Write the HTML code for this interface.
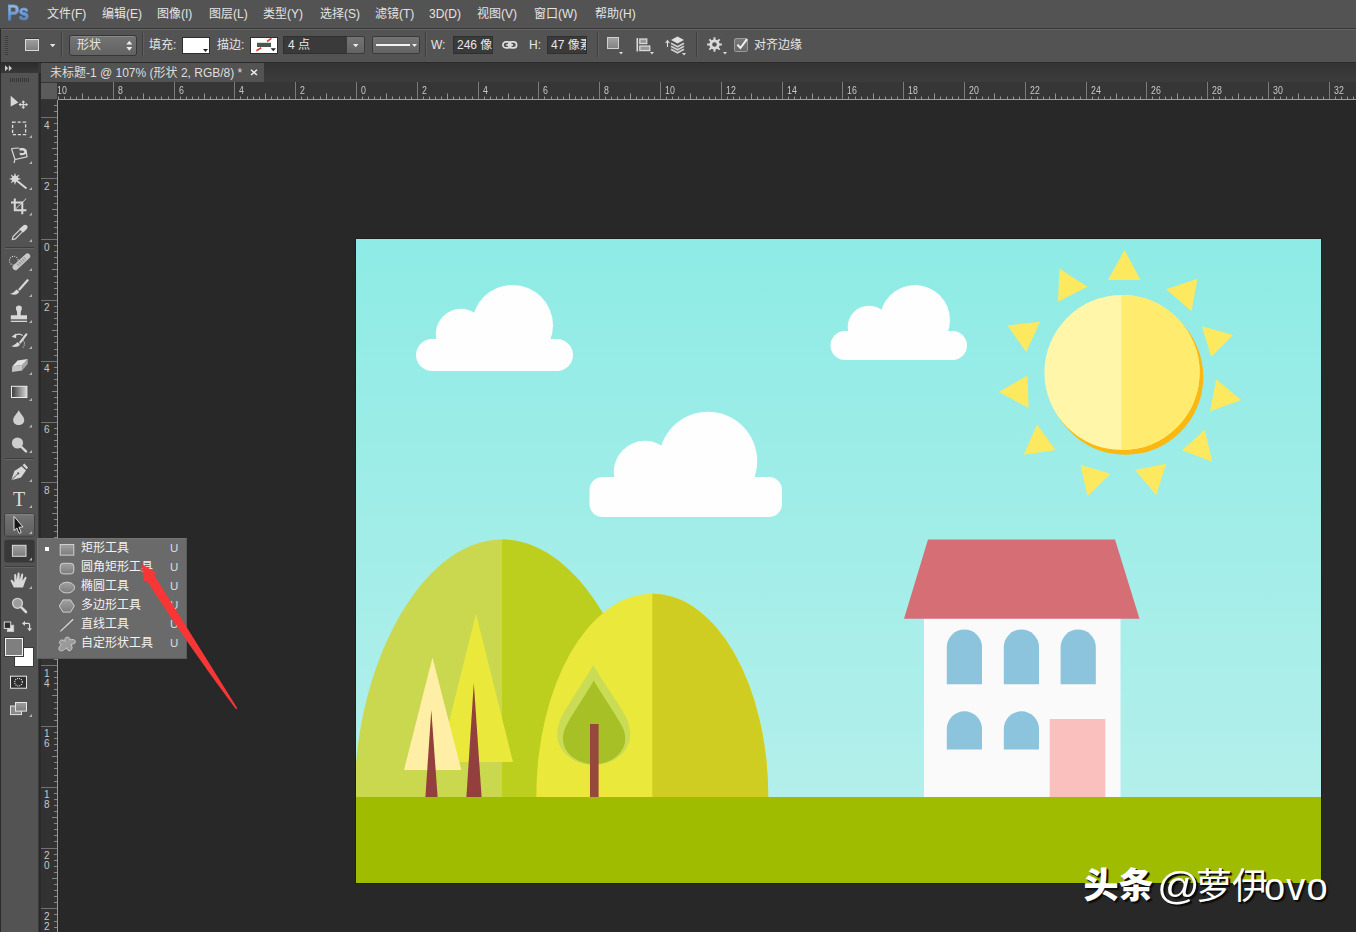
<!DOCTYPE html>
<html lang="zh"><head><meta charset="utf-8"><title>Photoshop</title>
<style>
html,body{margin:0;padding:0}
body{width:1356px;height:932px;overflow:hidden;background:#282828;position:relative;font-family:"Liberation Sans","Noto Sans CJK SC",sans-serif;font-size:12px;color:#e2e2e2;line-height:1}
.a{position:absolute;white-space:nowrap}
svg{position:absolute;display:block;overflow:visible}
#menubar{left:0;top:0;width:1356px;height:28px;background:#535353;border-bottom:1px solid #383838;box-sizing:content-box}
#optbar{left:0;top:29px;width:1356px;height:34px;background:#535353;border-top:1px solid #646464;border-bottom:1px solid #2b2b2b;box-sizing:border-box}
#tabstrip{left:39px;top:63px;width:1317px;height:19px;background:linear-gradient(#343434,#3c3c3c)}
#tab{left:41px;top:63px;width:223px;height:19px;background:#535353}
#hruler{left:41px;top:82px;width:1315px;height:18px;background:#363636}
#vruler{left:41px;top:100px;width:17px;height:832px;background:#323232}
#tools{left:0;top:63px;width:38px;height:869px;background:#535353}
#toolhead{left:0;top:63px;width:39px;height:10px;background:linear-gradient(#2c2c2c,#383838)}
.m{top:8px;color:#e4e4e4}
.o{top:39px;color:#e6e6e6}
.fld{top:36px;height:18px;background:#3a3a3a;border:1px solid #303030;box-sizing:border-box;color:#e8e8e8;overflow:hidden}
.sep{top:32px;width:1px;height:25px;background:#3f3f3f;border-right:1px solid #5f5f5f}
.fl{left:81px;color:#f2f2f2}
.fu{left:170px;color:#dcdce4;font-size:11.5px;margin-top:0.5px}
.k{display:inline-block;overflow:visible;white-space:nowrap;vertical-align:baseline}
.rl{font-size:10px;color:#c8c8c8}
.hl{transform:scaleX(0.88);transform-origin:0 0}
.wm{color:#fff;text-shadow:2px 2px 1px #0c0c0c,1px 1px 0 #111}
</style></head><body>
<!-- canvas artwork -->
<svg id="art" style="left:356px;top:239px;box-shadow:0 0 0 1px #1b2020" width="965" height="644" viewBox="356 239 965 644">
<defs>
<linearGradient id="sky" x1="0" y1="0" x2="0" y2="1"><stop offset="0" stop-color="#8eebe5"/><stop offset="1" stop-color="#b3efeb"/></linearGradient>
<clipPath id="cv"><rect x="356" y="239" width="965" height="644"/></clipPath>
<clipPath id="h1l"><rect x="356" y="500" width="146" height="300"/></clipPath>
<clipPath id="h1r"><rect x="502" y="500" width="200" height="400"/></clipPath>
<clipPath id="h2l"><rect x="520" y="560" width="132.5" height="240"/></clipPath>
<clipPath id="h2r"><rect x="652.3" y="560" width="140" height="240"/></clipPath>
<clipPath id="sl"><rect x="1030" y="280" width="91.3" height="190"/></clipPath>
<clipPath id="sr"><rect x="1121.3" y="280" width="100" height="190"/></clipPath>
</defs>
<g clip-path="url(#cv)">
<rect x="356" y="239" width="965" height="558" fill="url(#sky)"/>
<!-- cloud 1 -->
<g fill="#fefefe">
<rect x="416" y="339" width="157" height="32" rx="16"/>
<circle cx="512.5" cy="325.5" r="40.5"/>
<circle cx="461" cy="334" r="25.2"/>
<!-- cloud 2 -->
<rect x="830.5" y="331" width="136.5" height="29" rx="14.5"/>
<circle cx="915" cy="320" r="35"/>
<circle cx="869" cy="327" r="21.3"/>
<!-- cloud 3 -->
<rect x="589.5" y="477" width="192.5" height="40" rx="13"/>
<circle cx="708" cy="461" r="49.2"/>
<circle cx="645" cy="472" r="31.2"/>
</g>
<!-- sun -->
<circle cx="1125.5" cy="377" r="77.8" fill="#fbb811"/>
<circle cx="1122" cy="372.5" r="77.6" fill="#fff6aa"/>
<circle cx="1122" cy="372.5" r="77.6" fill="#ffec6e" clip-path="url(#sr)"/>
<g fill="#fde95f">
<polygon points="1124.5,250 1108,280 1140.5,280"/>
<polygon points="1059.5,268.7 1087.5,286.8 1058,301.7"/>
<polygon points="1007.5,325.5 1040,321.8 1026.2,352"/>
<polygon points="998.8,392 1027.5,375.5 1028.6,408"/>
<polygon points="1037,424.5 1055.5,450 1023.8,454.8"/>
<polygon points="1080.5,465 1110.5,473.8 1087.5,496.2"/>
<polygon points="1135,470 1166.2,463.8 1156.2,495"/>
<polygon points="1204.7,430 1212.3,461.7 1182,450.3"/>
<polygon points="1216.2,379.5 1241.2,400 1210,411.2"/>
<polygon points="1202,326.2 1233,335 1211.2,357"/>
<polygon points="1197.5,278.8 1166.2,289.2 1191.5,311.2"/>
</g>
<!-- hills -->
<path d="M354.5,798 V797 C354.5,665.3 421.3,539.5 502,539.5 C582.7,539.5 649.5,665.3 649.5,797 V798 Z" fill="#c9d84f"/>
<path d="M354.5,798 V797 C354.5,665.3 421.3,539.5 502,539.5 C582.7,539.5 649.5,665.3 649.5,797 V798 Z" fill="#bccf1e" clip-path="url(#h1r)"/>
<!-- trees on hill 1 -->
<polygon points="476,613.8 513,762 439,762" fill="#eae83b"/>
<polygon points="432.5,657.5 461.3,770 404,770" fill="#ffeea6"/>
<polygon points="431.3,710 437.6,797 425.4,797" fill="#923f3e"/>
<polygon points="473.8,683 481.6,797 466.4,797" fill="#923f3e"/>
<ellipse cx="652.3" cy="797" rx="116" ry="203.3" fill="#eae83b"/>
<ellipse cx="652.3" cy="797" rx="116" ry="203.3" fill="#cfcd21" clip-path="url(#h2r)"/>
<!-- leaf tree -->
<path d="M593.3,665 C599,676 622,708 626.5,718 C629,724 630.2,729 630.2,735 A36.45,30 0 0 1 557.3,735 C557.3,729 558.5,724 561,718 C565.5,708 587.6,676 593.3,665Z" fill="#cadc56"/>
<path d="M593.8,680.5 C599,690 616,715 620,722.5 C623.5,728 625.3,733 625.3,738.6 A31.2,25.7 0 0 1 562.9,738.6 C562.9,733 564.5,728 568,722.5 C572,715 588.6,690 593.8,680.5Z" fill="#a6c026"/>
<rect x="590" y="724" width="8.6" height="74" fill="#96483a"/>
<!-- house -->
<rect x="924" y="618" width="196.5" height="180" fill="#fafafa"/>
<polygon points="928,539.5 1115,539.5 1139.5,618.8 904,618.8" fill="#d56e75"/>
<g fill="#8bc4dc">
<path d="M946.8,684.3 V647.1 a17.6,17.6 0 0 1 35.2,0 V684.3 Z"/>
<path d="M1003.8,684.3 V647.1 a17.6,17.6 0 0 1 35.2,0 V684.3 Z"/>
<path d="M1060.6,684.3 V647.1 a17.6,17.6 0 0 1 35.2,0 V684.3 Z"/>
<path d="M946.8,749.5 V728.9 a17.6,17.6 0 0 1 35.2,0 V749.5 Z"/>
<path d="M1003.8,749.5 V728.9 a17.6,17.6 0 0 1 35.2,0 V749.5 Z"/>
</g>
<rect x="1049.7" y="719" width="55.6" height="79" fill="#fac0be"/>
<!-- ground -->
<rect x="356" y="797" width="965" height="86" fill="#a0bc00"/>
</g>
</svg>
<div class="a" id="menubar"></div>
<div class="a" id="optbar"></div>
<div class="a" style="left:0;top:29px;width:1px;height:34px;background:#2b2b2b"></div>
<div class="a" id="tabstrip"></div>
<div class="a" id="tab"></div>
<div class="a" id="hruler"></div>
<div class="a" id="vruler"></div>
<div class="a" style="left:7px;top:1px;font-size:22px;line-height:24px;font-weight:bold;color:#6c9bcd;letter-spacing:-0.5px;transform:scaleX(0.83);transform-origin:0 0;background:linear-gradient(#96bbe4 20%,#4a7cb8 85%);-webkit-background-clip:text;background-clip:text;-webkit-text-fill-color:transparent;-webkit-text-stroke:0.5px #5f8fc6">Ps</div>
<div class="a m" style="left:47px"><span class="k" style="width:2em">文件</span>(F)</div>
<div class="a m" style="left:102px"><span class="k" style="width:2em">编辑</span>(E)</div>
<div class="a m" style="left:157px"><span class="k" style="width:2em">图像</span>(I)</div>
<div class="a m" style="left:209px"><span class="k" style="width:2em">图层</span>(L)</div>
<div class="a m" style="left:263px"><span class="k" style="width:2em">类型</span>(Y)</div>
<div class="a m" style="left:320px"><span class="k" style="width:2em">选择</span>(S)</div>
<div class="a m" style="left:375px"><span class="k" style="width:2em">滤镜</span>(T)</div>
<div class="a m" style="left:429px">3D(D)</div>
<div class="a m" style="left:477px"><span class="k" style="width:2em">视图</span>(V)</div>
<div class="a m" style="left:534px"><span class="k" style="width:2em">窗口</span>(W)</div>
<div class="a m" style="left:595px"><span class="k" style="width:2em">帮助</span>(H)</div>
<div class="a" style="left:5px;top:36px;width:3px;height:19px;background:repeating-linear-gradient(#3a3a3a 0 1px,#5a5a5a 1px 2px)"></div>
<div class="a" style="left:25px;top:39px;width:14px;height:12px;box-sizing:border-box;border:1px solid #d9d9d9;background:linear-gradient(#9c9c9c,#7e7e7e);box-shadow:0 -1px 0 #3c3c3c"></div>
<svg style="left:50px;top:44px" width="6" height="4"><polygon points="0,0 5.4,0 2.7,3.2" fill="#e4e4e4"/></svg>
<div class="a sep" style="left:61px"></div>
<div class="a" style="left:69px;top:35px;width:68px;height:21px;box-sizing:border-box;border:1px solid #363636;border-radius:3px;background:linear-gradient(#747474,#626262);box-shadow:inset 0 1px 0 #888"></div>
<div class="a o" style="left:77px"><span class="k" style="width:2em">形状</span></div>
<svg style="left:126px;top:40px" width="7" height="12"><polygon points="0.3,4.6 6.3,4.6 3.3,0.8" fill="#ececec"/><polygon points="0.3,7 6.3,7 3.3,10.8" fill="#ececec"/></svg>
<div class="a sep" style="left:142px"></div>
<div class="a o" style="left:149px"><span class="k" style="width:2em">填充</span>:</div>
<div class="a" style="left:182px;top:37px;width:28px;height:17px;box-sizing:border-box;border:1px solid #2f2f2f;background:#fff"></div>
<svg style="left:203px;top:49px" width="6" height="4"><polygon points="0,0 5,0 2.5,3" fill="#222"/></svg>
<div class="a o" style="left:217px"><span class="k" style="width:2em">描边</span>:</div>
<div class="a" style="left:250px;top:37px;width:28px;height:17px;box-sizing:border-box;border:1px solid #2f2f2f;background:#fff"></div>
<svg style="left:250px;top:37px" width="28" height="17"><rect x="7" y="5.8" width="14" height="4.2" fill="#4a5750"/><path d="M6.4,13.8 L11.3,10.7 M17,4.5 L21.5,1.4" stroke="#d94040" stroke-width="1.6" fill="none"/><polygon points="20.6,11.2 26,11.2 23.3,14.3" fill="#222"/></svg>
<div class="a fld" style="left:283px;width:64px"></div>
<div class="a o" style="left:288px">4 <span class="k" style="width:1em">点</span></div>
<div class="a" style="left:346px;top:36px;width:19px;height:18px;box-sizing:border-box;border:1px solid #3a3a3a;border-radius:0 2px 2px 0;background:linear-gradient(#747474,#636363)"></div>
<svg style="left:353px;top:44px" width="6" height="4"><polygon points="0,0 5.4,0 2.7,3.2" fill="#ececec"/></svg>
<div class="a" style="left:372px;top:36px;width:48px;height:18px;box-sizing:border-box;border:1px solid #3a3a3a;border-radius:2px;background:linear-gradient(#747474,#636363)"></div>
<div class="a" style="left:376px;top:44px;width:34px;height:2px;background:#f4f4f4"></div>
<svg style="left:412px;top:44px" width="6" height="4"><polygon points="0,0 5,0 2.5,3" fill="#ececec"/></svg>
<div class="a sep" style="left:425px"></div>
<div class="a o" style="left:431px">W:</div>
<div class="a fld" style="left:453px;width:40px"></div>
<div class="a o" style="left:457px;width:35px;overflow:hidden">246 <span class="k" style="width:2em">像素</span></div>
<svg style="left:502px;top:40px" width="16" height="10"><rect x="0.9" y="1.9" width="8" height="6" rx="3" fill="none" stroke="#dedede" stroke-width="1.7"/><rect x="6.6" y="1.9" width="8" height="6" rx="3" fill="none" stroke="#dedede" stroke-width="1.7"/><rect x="4.3" y="4.1" width="6.8" height="1.7" fill="#dedede"/></svg>
<div class="a o" style="left:529px">H:</div>
<div class="a fld" style="left:547px;width:40px"></div>
<div class="a o" style="left:551px;width:35px;overflow:hidden">47 <span class="k" style="width:2em">像素</span></div>
<div class="a sep" style="left:597px"></div>
<div class="a" style="left:607px;top:37px;width:12px;height:12px;box-sizing:border-box;border:1px solid #cfcfcf;background:linear-gradient(#a2a2a2,#848484)"></div>
<svg style="left:619px;top:52px" width="5" height="3"><polygon points="0,0 4,0 2,2.4" fill="#dcdcdc"/></svg>
<svg style="left:636px;top:37px" width="20" height="18"><rect x="0.5" y="1" width="1.6" height="13.5" fill="#dcdcdc"/><rect x="3.8" y="2" width="7" height="4.6" fill="#9a9a9a" stroke="#dcdcdc" stroke-width="1.2"/><rect x="3.8" y="9" width="10" height="4.6" fill="#9a9a9a" stroke="#dcdcdc" stroke-width="1.2"/><polygon points="14,15 18,15 16,17.4" fill="#dcdcdc"/></svg>
<svg style="left:665px;top:35px" width="22" height="21"><path d="M2.5,12 V6 M0.6,8 L2.5,5.6 L4.4,8" stroke="#dcdcdc" stroke-width="1.1" fill="none"/><polygon points="12.5,1.5 19,5 12.5,8.5 6,5" fill="#e0e0e0"/><path d="M6,8.2 L12.5,11.7 L19,8.2 M6,11.2 L12.5,14.7 L19,11.2 M6,14.2 L12.5,17.7 L19,14.2" stroke="#cfcfcf" stroke-width="1.7" fill="none"/><polygon points="17,18 21,18 19,20.4" fill="#dcdcdc"/></svg>
<div class="a sep" style="left:696px"></div>
<svg style="left:707px;top:37px" width="22" height="19"><polygon points="14.84,6.54 14.84,8.46 12.61,8.45 11.79,10.44 13.37,12.01 12.01,13.37 10.44,11.79 8.45,12.61 8.46,14.84 6.54,14.84 6.55,12.61 4.56,11.79 2.99,13.37 1.63,12.01 3.21,10.44 2.39,8.45 0.16,8.46 0.16,6.54 2.39,6.55 3.21,4.56 1.63,2.99 2.99,1.63 4.56,3.21 6.55,2.39 6.54,0.16 8.46,0.16 8.45,2.39 10.44,3.21 12.01,1.63 13.37,2.99 11.79,4.56 12.61,6.55" fill="#dadada"/><circle cx="7.5" cy="7.5" r="2.3" fill="#535353"/><polygon points="16,15 20,15 18,17.4" fill="#dcdcdc"/></svg>
<div class="a" style="left:734px;top:38px;width:14px;height:14px;box-sizing:border-box;border:1px solid #9a9a9a;border-radius:2px;background:linear-gradient(#787878,#676767)"></div>
<svg style="left:734px;top:36px" width="16" height="16"><path d="M3.4,8.6 L6.4,12 L13,3.2" stroke="#f2f2f2" stroke-width="2" fill="none"/></svg>
<div class="a o" style="left:754px"><span class="k" style="width:4em">对齐边缘</span></div>
<div class="a" style="left:50px;top:67px;color:#dedede"><span class="k" style="width:3em">未标题</span>-1 @ 107% (<span class="k" style="width:2em">形状</span> 2, RGB/8) *</div>
<svg style="left:250px;top:69px" width="8" height="7"><path d="M1,0.8 L7,6 M7,0.8 L1,6" stroke="#ececec" stroke-width="1.5"/></svg>
<svg style="left:0;top:0" width="1356" height="101"><path d="M113.5,82V99M174.5,82V99M234.5,82V99M295.5,82V99M356.5,82V99M417.5,82V99M478.5,82V99M538.5,82V99M599.5,82V99M660.5,82V99M721.5,82V99M782.5,82V99M842.5,82V99M903.5,82V99M964.5,82V99M1025.5,82V99M1086.5,82V99M1146.5,82V99M1207.5,82V99M1268.5,82V99M1329.5,82V99" stroke="#7c7c7c" stroke-width="1" fill="none"/><path d="M58.5,96.5V100M64.5,96.5V100M70.5,96.5V100M76.5,96.5V100M82.5,93.5V100M88.5,96.5V100M95.5,96.5V100M101.5,96.5V100M107.5,96.5V100M119.5,96.5V100M125.5,96.5V100M131.5,96.5V100M137.5,96.5V100M143.5,93.5V100M149.5,96.5V100M155.5,96.5V100M161.5,96.5V100M168.5,96.5V100M180.5,96.5V100M186.5,96.5V100M192.5,96.5V100M198.5,96.5V100M204.5,93.5V100M210.5,96.5V100M216.5,96.5V100M222.5,96.5V100M228.5,96.5V100M240.5,96.5V100M247.5,96.5V100M253.5,96.5V100M259.5,96.5V100M265.5,93.5V100M271.5,96.5V100M277.5,96.5V100M283.5,96.5V100M289.5,96.5V100M301.5,96.5V100M307.5,96.5V100M313.5,96.5V100M320.5,96.5V100M326.5,93.5V100M332.5,96.5V100M338.5,96.5V100M344.5,96.5V100M350.5,96.5V100M362.5,96.5V100M368.5,96.5V100M374.5,96.5V100M380.5,96.5V100M386.5,93.5V100M392.5,96.5V100M399.5,96.5V100M405.5,96.5V100M411.5,96.5V100M423.5,96.5V100M429.5,96.5V100M435.5,96.5V100M441.5,96.5V100M447.5,93.5V100M453.5,96.5V100M459.5,96.5V100M465.5,96.5V100M472.5,96.5V100M484.5,96.5V100M490.5,96.5V100M496.5,96.5V100M502.5,96.5V100M508.5,93.5V100M514.5,96.5V100M520.5,96.5V100M526.5,96.5V100M532.5,96.5V100M544.5,96.5V100M551.5,96.5V100M557.5,96.5V100M563.5,96.5V100M569.5,93.5V100M575.5,96.5V100M581.5,96.5V100M587.5,96.5V100M593.5,96.5V100M605.5,96.5V100M611.5,96.5V100M617.5,96.5V100M624.5,96.5V100M630.5,93.5V100M636.5,96.5V100M642.5,96.5V100M648.5,96.5V100M654.5,96.5V100M666.5,96.5V100M672.5,96.5V100M678.5,96.5V100M684.5,96.5V100M690.5,93.5V100M696.5,96.5V100M703.5,96.5V100M709.5,96.5V100M715.5,96.5V100M727.5,96.5V100M733.5,96.5V100M739.5,96.5V100M745.5,96.5V100M751.5,93.5V100M757.5,96.5V100M763.5,96.5V100M769.5,96.5V100M776.5,96.5V100M788.5,96.5V100M794.5,96.5V100M800.5,96.5V100M806.5,96.5V100M812.5,93.5V100M818.5,96.5V100M824.5,96.5V100M830.5,96.5V100M836.5,96.5V100M848.5,96.5V100M855.5,96.5V100M861.5,96.5V100M867.5,96.5V100M873.5,93.5V100M879.5,96.5V100M885.5,96.5V100M891.5,96.5V100M897.5,96.5V100M909.5,96.5V100M915.5,96.5V100M921.5,96.5V100M928.5,96.5V100M934.5,93.5V100M940.5,96.5V100M946.5,96.5V100M952.5,96.5V100M958.5,96.5V100M970.5,96.5V100M976.5,96.5V100M982.5,96.5V100M988.5,96.5V100M994.5,93.5V100M1000.5,96.5V100M1007.5,96.5V100M1013.5,96.5V100M1019.5,96.5V100M1031.5,96.5V100M1037.5,96.5V100M1043.5,96.5V100M1049.5,96.5V100M1055.5,93.5V100M1061.5,96.5V100M1067.5,96.5V100M1073.5,96.5V100M1080.5,96.5V100M1092.5,96.5V100M1098.5,96.5V100M1104.5,96.5V100M1110.5,96.5V100M1116.5,93.5V100M1122.5,96.5V100M1128.5,96.5V100M1134.5,96.5V100M1140.5,96.5V100M1152.5,96.5V100M1159.5,96.5V100M1165.5,96.5V100M1171.5,96.5V100M1177.5,93.5V100M1183.5,96.5V100M1189.5,96.5V100M1195.5,96.5V100M1201.5,96.5V100M1213.5,96.5V100M1219.5,96.5V100M1225.5,96.5V100M1232.5,96.5V100M1238.5,93.5V100M1244.5,96.5V100M1250.5,96.5V100M1256.5,96.5V100M1262.5,96.5V100M1274.5,96.5V100M1280.5,96.5V100M1286.5,96.5V100M1292.5,96.5V100M1298.5,93.5V100M1304.5,96.5V100M1311.5,96.5V100M1317.5,96.5V100M1323.5,96.5V100M1335.5,96.5V100M1341.5,96.5V100M1347.5,96.5V100M1353.5,96.5V100" stroke="#959595" stroke-width="1" fill="none"/><rect x="58" y="99" width="1298" height="1" fill="#9e9e9e"/></svg>
<div class="a" style="left:58px;top:82px;width:1298px;height:17px;overflow:hidden"><span class="a rl hl" style="left:-1.4px;top:4px">10</span><span class="a rl hl" style="left:59.6px;top:4px">8</span><span class="a rl hl" style="left:120.6px;top:4px">6</span><span class="a rl hl" style="left:180.6px;top:4px">4</span><span class="a rl hl" style="left:241.6px;top:4px">2</span><span class="a rl hl" style="left:302.6px;top:4px">0</span><span class="a rl hl" style="left:363.6px;top:4px">2</span><span class="a rl hl" style="left:424.6px;top:4px">4</span><span class="a rl hl" style="left:484.6px;top:4px">6</span><span class="a rl hl" style="left:545.6px;top:4px">8</span><span class="a rl hl" style="left:606.6px;top:4px">10</span><span class="a rl hl" style="left:667.6px;top:4px">12</span><span class="a rl hl" style="left:728.6px;top:4px">14</span><span class="a rl hl" style="left:788.6px;top:4px">16</span><span class="a rl hl" style="left:849.6px;top:4px">18</span><span class="a rl hl" style="left:910.6px;top:4px">20</span><span class="a rl hl" style="left:971.6px;top:4px">22</span><span class="a rl hl" style="left:1032.6px;top:4px">24</span><span class="a rl hl" style="left:1092.6px;top:4px">26</span><span class="a rl hl" style="left:1153.6px;top:4px">28</span><span class="a rl hl" style="left:1214.6px;top:4px">30</span><span class="a rl hl" style="left:1275.6px;top:4px">32</span></div>
<div class="a" style="left:41px;top:83px;width:16px;height:16px;background:#5b5b5b"></div>
<svg style="left:0;top:0" width="59" height="932"><path d="M41,117.5H57M41,178.5H57M41,239.5H57M41,300.5H57M41,361.5H57M41,422.5H57M41,482.5H57M41,543.5H57M41,604.5H57M41,665.5H57M41,726.5H57M41,787.5H57M41,848.5H57M41,908.5H57" stroke="#727272" stroke-width="1" fill="none"/><path d="M54,105.5H58M54,111.5H58M54,123.5H58M54,130.5H58M54,136.5H58M54,142.5H58M52,148.5H58M54,154.5H58M54,160.5H58M54,166.5H58M54,172.5H58M54,184.5H58M54,190.5H58M54,196.5H58M54,203.5H58M52,209.5H58M54,215.5H58M54,221.5H58M54,227.5H58M54,233.5H58M54,245.5H58M54,251.5H58M54,257.5H58M54,263.5H58M52,269.5H58M54,276.5H58M54,282.5H58M54,288.5H58M54,294.5H58M54,306.5H58M54,312.5H58M54,318.5H58M54,324.5H58M52,330.5H58M54,336.5H58M54,342.5H58M54,349.5H58M54,355.5H58M54,367.5H58M54,373.5H58M54,379.5H58M54,385.5H58M52,391.5H58M54,397.5H58M54,403.5H58M54,409.5H58M54,416.5H58M54,428.5H58M54,434.5H58M54,440.5H58M54,446.5H58M52,452.5H58M54,458.5H58M54,464.5H58M54,470.5H58M54,476.5H58M54,489.5H58M54,495.5H58M54,501.5H58M54,507.5H58M52,513.5H58M54,519.5H58M54,525.5H58M54,531.5H58M54,537.5H58M54,549.5H58M54,555.5H58M54,562.5H58M54,568.5H58M52,574.5H58M54,580.5H58M54,586.5H58M54,592.5H58M54,598.5H58M54,610.5H58M54,616.5H58M54,622.5H58M54,628.5H58M52,635.5H58M54,641.5H58M54,647.5H58M54,653.5H58M54,659.5H58M54,671.5H58M54,677.5H58M54,683.5H58M54,689.5H58M52,695.5H58M54,702.5H58M54,708.5H58M54,714.5H58M54,720.5H58M54,732.5H58M54,738.5H58M54,744.5H58M54,750.5H58M52,756.5H58M54,762.5H58M54,768.5H58M54,775.5H58M54,781.5H58M54,793.5H58M54,799.5H58M54,805.5H58M54,811.5H58M52,817.5H58M54,823.5H58M54,829.5H58M54,835.5H58M54,841.5H58M54,854.5H58M54,860.5H58M54,866.5H58M54,872.5H58M52,878.5H58M54,884.5H58M54,890.5H58M54,896.5H58M54,902.5H58M54,914.5H58M54,921.5H58M54,927.5H58" stroke="#868686" stroke-width="1" fill="none"/><rect x="57" y="100" width="1" height="832" fill="#9a9a9a"/></svg>
<div class="a rl" style="left:44px;top:120.9px;width:6px;line-height:10px;white-space:normal;word-break:break-all">4</div><div class="a rl" style="left:44px;top:181.7px;width:6px;line-height:10px;white-space:normal;word-break:break-all">2</div><div class="a rl" style="left:44px;top:242.6px;width:6px;line-height:10px;white-space:normal;word-break:break-all">0</div><div class="a rl" style="left:44px;top:303.4px;width:6px;line-height:10px;white-space:normal;word-break:break-all">2</div><div class="a rl" style="left:44px;top:364.2px;width:6px;line-height:10px;white-space:normal;word-break:break-all">4</div><div class="a rl" style="left:44px;top:425.1px;width:6px;line-height:10px;white-space:normal;word-break:break-all">6</div><div class="a rl" style="left:44px;top:486.0px;width:6px;line-height:10px;white-space:normal;word-break:break-all">8</div><div class="a rl" style="left:44px;top:546.8px;width:6px;line-height:10px;white-space:normal;word-break:break-all">10</div><div class="a rl" style="left:44px;top:607.7px;width:6px;line-height:10px;white-space:normal;word-break:break-all">12</div><div class="a rl" style="left:44px;top:668.5px;width:6px;line-height:10px;white-space:normal;word-break:break-all">14</div><div class="a rl" style="left:44px;top:729.4px;width:6px;line-height:10px;white-space:normal;word-break:break-all">16</div><div class="a rl" style="left:44px;top:790.2px;width:6px;line-height:10px;white-space:normal;word-break:break-all">18</div><div class="a rl" style="left:44px;top:851.0px;width:6px;line-height:10px;white-space:normal;word-break:break-all">20</div><div class="a rl" style="left:44px;top:911.9px;width:6px;line-height:10px;white-space:normal;word-break:break-all">22</div>
<!-- tools panel -->
<div class="a" id="tools"></div>
<div class="a" id="toolhead"></div>
<div class="a" style="left:0;top:63px;width:1px;height:869px;background:#2b2b2b"></div>
<div class="a" style="left:38px;top:63px;width:1px;height:869px;background:#3a3a3a"></div>
<div class="a" style="left:39px;top:73px;width:2px;height:859px;background:#2a2a2a"></div>
<svg id="toolsvg" style="left:0;top:63px" width="39" height="869" viewBox="0 63 39 869">
<defs>
<linearGradient id="gb" x1="0" y1="0" x2="0" y2="1"><stop offset="0" stop-color="#747474"/><stop offset="1" stop-color="#5e5e5e"/></linearGradient>
<linearGradient id="gs" x1="0" y1="0" x2="0" y2="1"><stop offset="0" stop-color="#a0a0a0"/><stop offset="1" stop-color="#7c7c7c"/></linearGradient>
<linearGradient id="gg" x1="0" y1="0" x2="1" y2="0"><stop offset="0" stop-color="#3a3a3a"/><stop offset="1" stop-color="#d8d8d8"/></linearGradient>
</defs>
<!-- header arrows, grip -->
<polygon points="5,65.2 8.2,68.2 5,71.2" fill="#cfcfcf"/><polygon points="8.8,65.2 12,68.2 8.8,71.2" fill="#cfcfcf"/>
<path d="M10.5,78v4M12.5,78v4M14.5,78v4M16.5,78v4M18.5,78v4M20.5,78v4M22.5,78v4M24.5,78v4M26.5,78v4M28.5,78v4" stroke="#363636" stroke-width="1"/>
<!-- separators -->
<g stroke="#3d3d3d" stroke-width="1"><path d="M5,247.5H34M5,458.5H34M5,566.5H34"/></g>
<g stroke="#636363" stroke-width="1"><path d="M5,248.5H34M5,459.5H34M5,567.5H34"/></g>
<g fill="#d8d8d8" stroke="none">
<!-- move -->
<polygon points="10.7,95.8 18.4,102.6 10.7,106.6"/>
<path d="M23.3,100.3 l2,2.3 h-1.4 v1.4 h1.9 v-1.3 l2.3,1.9 l-2.3,1.9 v-1.3 h-1.9 v1.5 h1.4 l-2,2.3 l-2,-2.3 h1.4 v-1.5 h-1.9 v1.3 l-2.3,-1.9 l2.3,-1.9 v1.3 h1.9 v-1.4 h-1.4 z"/>
</g>
<!-- marquee -->
<rect x="12.6" y="122.2" width="13" height="12.4" fill="none" stroke="#dcdcdc" stroke-width="1.3" stroke-dasharray="3.2 1.8"/>
<!-- polygonal lasso -->
<path d="M11.5,148.5 L19,148 M11.5,148.5 L15,159.5 L27,156.8 L26.3,152 M15,159.5 L14,163" fill="none" stroke="#d8d8d8" stroke-width="1.2"/>
<path d="M19.2,148.3 c6,-1.5 8.5,1.5 7.6,4.3 c-0.8,2.6 -5,3.2 -6.8,2.3 l-0.5,-2.3 c2,0.9 4.4,0.6 4.7,-0.7 c0.3,-1.3 -1.8,-1.9 -4.4,-1.2 z" fill="#d8d8d8"/>
<!-- magic wand -->
<path d="M17.8,181.5 L26.5,188.5" stroke="#d8d8d8" stroke-width="2" fill="none"/>
<path d="M15,172.8 l1.1,3.4 l3.3,-1.7 l-1.7,3.2 l3.4,1.2 l-3.4,1.1 l1.6,3.2 l-3.2,-1.7 l-1.1,3.5 l-1.1,-3.5 l-3.2,1.7 l1.6,-3.2 l-3.4,-1.1 l3.4,-1.2 l-1.7,-3.2 l3.3,1.7 z" fill="#d8d8d8"/>
<!-- crop -->
<path d="M14.8,198.5 V210.3 H26.4 M11,202.6 H22.3 V214.2" fill="none" stroke="#d8d8d8" stroke-width="2"/>
<path d="M26.2,198.6 L16,208.6" stroke="#d8d8d8" stroke-width="1"/>
<!-- eyedropper -->
<path d="M12.3,239.6 L13,236.6 L20.3,229.3 L22.6,231.6 L15.3,238.9 Z" fill="none" stroke="#d8d8d8" stroke-width="1.1"/>
<path d="M19.4,228.6 L23.3,232.5 L24.6,231.2 L27,228.8 C28,227.6 27.6,226 26.7,225.3 C25.8,224.5 24.3,224.4 23.2,225.4 L20.8,227.8 Z" fill="#d8d8d8"/>
<!-- spot heal -->
<circle cx="13.8" cy="260.7" r="4.4" fill="none" stroke="#d8d8d8" stroke-width="1.1" stroke-dasharray="1 1.3"/>
<path d="M15.4,267.4 L27.4,256.2" stroke="#c8c8c8" stroke-width="5.6" stroke-linecap="round" fill="none"/>
<path d="M17.8,265.2 L25.2,258.2" stroke="#8a8a8a" stroke-width="3.2" stroke-dasharray="1 1.4" fill="none"/>
<!-- brush -->
<path d="M27.6,280.2 L19.4,289.4" stroke="#d8d8d8" stroke-width="2.2" stroke-linecap="round" fill="none"/>
<path d="M10,293.6 C13,293.4 14.6,291.6 16.4,289.4 L19.2,291.6 C18.6,294.6 14.2,296 10,293.6 Z" fill="#d8d8d8"/>
<!-- stamp -->
<path d="M18.9,305.5 a3,3 0 0 1 3,3 c0,1.6 -1.2,2.4 -1.2,4.4 v2.3 h6.3 v4.4 h-16.2 v-4.4 h6.3 v-2.3 c0,-2 -1.2,-2.8 -1.2,-4.4 a3,3 0 0 1 3,-3 z" fill="#d8d8d8"/>
<rect x="10.8" y="320.6" width="16.2" height="1.4" fill="#d8d8d8"/>
<rect x="10.8" y="319.4" width="16.2" height="1.1" fill="#6a6a6a"/>
<!-- history brush -->
<path d="M26.3,334.4 L20.3,342.4" stroke="#d8d8d8" stroke-width="2.2" stroke-linecap="round" fill="none"/>
<path d="M11.2,346 C14,345.6 15.8,344 17.4,342 L20,344 C19.4,346.8 15.2,348.2 11.2,346 Z" fill="#d8d8d8"/>
<path d="M14.2,336.2 C17,333.4 20.6,333.6 22.6,335.6" stroke="#d8d8d8" stroke-width="1.3" fill="none"/>
<polygon points="11.6,336.8 16,333.4 16.2,338.2" fill="#d8d8d8"/>
<path d="M23.3,340.5 C25.2,342.6 24.6,346 22.6,347.6" stroke="#d8d8d8" stroke-width="1.1" stroke-dasharray="1 1.2" fill="none"/>
<!-- eraser -->
<polygon points="12.2,366.4 17.6,360.6 27.8,359 22.6,364.8" fill="#e2e2e2"/>
<polygon points="12.2,366.4 22.6,364.8 22.2,370.4 12,372" fill="#c4c4c4"/>
<polygon points="22.6,364.8 27.8,359 27.6,364 22.2,370.4" fill="#a8a8a8"/>
<!-- gradient -->
<rect x="11.5" y="386.3" width="15.4" height="11.2" fill="url(#gg)" stroke="#ececec" stroke-width="1"/>
<!-- blur drop -->
<path d="M18.7,410.3 C20.4,414 24.2,416.6 24.2,420 C24.2,423.2 21.8,425 18.7,425 C15.6,425 13.2,423.2 13.2,420 C13.2,416.6 17,414 18.7,410.3 Z" fill="#d0d0d0"/>
<!-- dodge -->
<circle cx="17.5" cy="443" r="5.6" fill="#cdcdcd"/>
<path d="M21.4,447 L26,451.4" stroke="#d8d8d8" stroke-width="2.4" stroke-linecap="round"/>
<!-- pen -->
<path d="M11.3,480.3 L14.4,471 L21.6,466.2 L26,470.6 L21,477.6 Z" fill="#d8d8d8"/>
<path d="M22.6,465.2 L24.4,463.6 L28,467.4 L26.6,469.2 Z" fill="#d8d8d8"/>
<path d="M11.3,480.3 L17.5,474" stroke="#555" stroke-width="1"/><circle cx="18.2" cy="473.4" r="1.1" fill="#555"/>
<!-- path select button + arrow -->
<rect x="4.5" y="513.8" width="30" height="22.4" rx="2" fill="url(#gb)" stroke="#404040" stroke-width="1"/>
<path d="M5.5,514.8 H33.5" stroke="#8a8a8a" stroke-width="1"/>
<path d="M14,516.4 V530.6 L16.9,528 L19,533.4 L21.2,532.5 L19,527.2 L23,527 Z" fill="#161616" stroke="#ececec" stroke-width="0.9"/>
<!-- shape button -->
<rect x="4.3" y="539.8" width="30.4" height="22.6" rx="2.5" fill="#383838"/>
<rect x="12.4" y="545.3" width="13.6" height="11" fill="url(#gs)" stroke="#dadada" stroke-width="1"/>
<!-- hand -->
<path d="M13.8,587.6 C12.6,584.8 11.2,582.4 10.6,580.8 C10.4,579.6 11.8,579.2 12.6,580.2 L14.4,582.6 L14.2,575 C14.2,573.6 16,573.6 16.2,575 L16.8,580 L17.6,573.4 C17.8,572 19.6,572.2 19.6,573.6 L19.6,580 L21.2,574.4 C21.6,573 23.4,573.4 23.2,574.8 L22.4,580.8 L24.6,577.4 C25.4,576.2 27,577 26.4,578.4 C25,581.6 24.2,584.4 23,587.6 Z" fill="#d8d8d8"/>
<!-- zoom -->
<circle cx="17.5" cy="603.3" r="4.9" fill="#9c9c9c" stroke="#d0d0d0" stroke-width="1.4"/>
<path d="M21.6,607.6 L26,612" stroke="#d8d8d8" stroke-width="2.6" stroke-linecap="round"/>
<!-- default colors -->
<rect x="7.3" y="625.2" width="6.4" height="6.4" fill="#e0e0e0" stroke="#c8c8c8" stroke-width="0.8"/>
<rect x="4.3" y="622" width="6.4" height="6.4" fill="#2c2c2c" stroke="#d8d8d8" stroke-width="1"/>
<!-- swap -->
<path d="M24.6,623.4 H28.4 C29.4,623.4 29.6,624 29.6,625 V628.4" stroke="#dcdcdc" stroke-width="1.3" fill="none"/>
<polygon points="22,623.4 25,621 25,625.8" fill="#dcdcdc"/><polygon points="29.6,631.2 27.2,628.2 32,628.2" fill="#dcdcdc"/>
<!-- bg / fg swatches -->
<rect x="14.5" y="647.5" width="19" height="19" fill="#ffffff" stroke="#3a3a3a" stroke-width="1"/>
<rect x="4.5" y="637.5" width="19" height="19" fill="none" stroke="#3a3a3a" stroke-width="1"/>
<rect x="5" y="638" width="18" height="18" fill="#f4f4f4"/>
<rect x="6" y="639" width="16" height="16" fill="#7f7f7f"/>
<!-- quick mask -->
<rect x="10.5" y="676.2" width="16" height="12" fill="#2e2e2e" stroke="#e6e6e6" stroke-width="1"/>
<circle cx="18.5" cy="682.2" r="3.8" fill="none" stroke="#f0f0f0" stroke-width="1.1" stroke-dasharray="1 1"/>
<!-- screen mode -->
<rect x="10.5" y="706" width="11" height="8.6" fill="#8a8a8a" stroke="#e0e0e0" stroke-width="1"/>
<rect x="15.5" y="702.5" width="11" height="8.6" fill="url(#gs)" stroke="#e6e6e6" stroke-width="1"/>
<!-- flyout corner marks -->
<g fill="#b4b4b4">
<polygon points="32,135 32,138 29,138"/><polygon points="32,161 32,164 29,164"/><polygon points="32,187 32,190 29,190"/><polygon points="32,212.5 32,215.5 29,215.5"/><polygon points="32,239 32,242 29,242"/>
<polygon points="32,268 32,271 29,271"/><polygon points="32,294 32,297 29,297"/><polygon points="32,320 32,323 29,323"/><polygon points="32,346 32,349 29,349"/>
<polygon points="32,372 32,375 29,375"/><polygon points="32,398 32,401 29,401"/><polygon points="32,424.5 32,427.5 29,427.5"/><polygon points="32,450 32,453 29,453"/>
<polygon points="32,479 32,482 29,482"/><polygon points="32,505 32,508 29,508"/><polygon points="32,531 32,534 29,534"/><polygon points="32,557.5 32,560.5 29,560.5"/><polygon points="32,586 32,589 29,589"/>
<polygon points="32,714 32,717 29,717"/>
</g>
</svg>
<div class="a" style="left:12px;top:489px;width:14px;text-align:center;font-family:'Liberation Serif',serif;font-size:20px;color:#dcdcdc">T</div>
<!-- flyout menu -->
<div class="a" style="left:37px;top:538px;width:150px;height:121px;background:#6a6a6a;box-sizing:border-box;border:1px solid #747474;border-right-color:#5c5c5c;border-bottom-color:#5c5c5c"></div>
<div class="a" style="left:45px;top:547px;width:4px;height:4px;background:#fff"></div>
<svg id="flyicons" style="left:56px;top:540px" width="24" height="116" viewBox="56 540 24 116">
<rect x="60.2" y="544.5" width="13.6" height="10.6" fill="url(#gs)" stroke="#d0d0d0" stroke-width="1"/>
<rect x="60.2" y="563.3" width="13.6" height="10.6" rx="3" fill="url(#gs)" stroke="#d0d0d0" stroke-width="1"/>
<ellipse cx="67" cy="587.6" rx="7.6" ry="5.4" fill="url(#gs)" stroke="#d0d0d0" stroke-width="1"/>
<polygon points="59.3,606 63,599.9 70.6,599.9 74.3,606 70.6,612.1 63,612.1" fill="url(#gs)" stroke="#d0d0d0" stroke-width="1"/>
<path d="M60.4,631.4 L73.2,619.2" stroke="#d8d8d8" stroke-width="1.3"/>
<path d="M66,637.6 C68,636.4 70.4,637.6 70,640 C72,638.8 75.6,639.6 75.4,641.8 C75.2,644 72.6,644 71,644.4 C72.6,646.6 72.4,649.6 70.4,650.6 C68.4,651.4 66.6,649.4 66.2,647.6 C64.8,649.6 62.4,651.6 60,650.6 C57.8,649.4 59,646.2 61.4,644.6 C59.4,644.2 58.6,641.6 60.4,640.4 C62.2,639.4 64.2,640.4 65.2,641.4 C64.6,640 64.6,638.4 66,637.6 Z" fill="#9a9a9a" stroke="#c8c8c8" stroke-width="1"/>
</svg>
<div class="a fl" style="top:542px"><span class="k" style="width:4em">矩形工具</span></div><div class="a fu" style="top:542px">U</div>
<div class="a fl" style="top:561px"><span class="k" style="width:6em">圆角矩形工具</span></div><div class="a fu" style="top:561px">U</div>
<div class="a fl" style="top:580px"><span class="k" style="width:4em">椭圆工具</span></div><div class="a fu" style="top:580px">U</div>
<div class="a fl" style="top:599px"><span class="k" style="width:5em">多边形工具</span></div><div class="a fu" style="top:599px">U</div>
<div class="a fl" style="top:618px"><span class="k" style="width:4em">直线工具</span></div><div class="a fu" style="top:618px">U</div>
<div class="a fl" style="top:637px"><span class="k" style="width:6em">自定形状工具</span></div><div class="a fu" style="top:637px">U</div>
<!-- red arrow -->
<svg style="left:130px;top:555px" width="120" height="165" viewBox="130 555 120 165"><path d="M141.6,564 L156.4,572.7 L154.1,575 L237.3,708.2 L236,709.3 Q189,646.4 146.7,580.4 L143.8,581.4 Z" fill="#f93636"/></svg>
<!-- watermark -->
<div class="a wm" style="left:1083.5px;top:867.5px;font-size:35px;font-weight:900"><span class="k" style="width:2em">头条</span></div>
<div class="a wm" style="left:1157px;top:866px;font-size:39px;transform:scaleX(1.08);transform-origin:0 0">@</div>
<div class="a wm" style="left:1196px;top:869px;font-size:36px"><span class="k" style="width:2em">萝伊</span></div>
<div class="a wm" style="left:1264px;top:868px;font-size:38px;letter-spacing:1.2px">ovo</div>
</body></html>
